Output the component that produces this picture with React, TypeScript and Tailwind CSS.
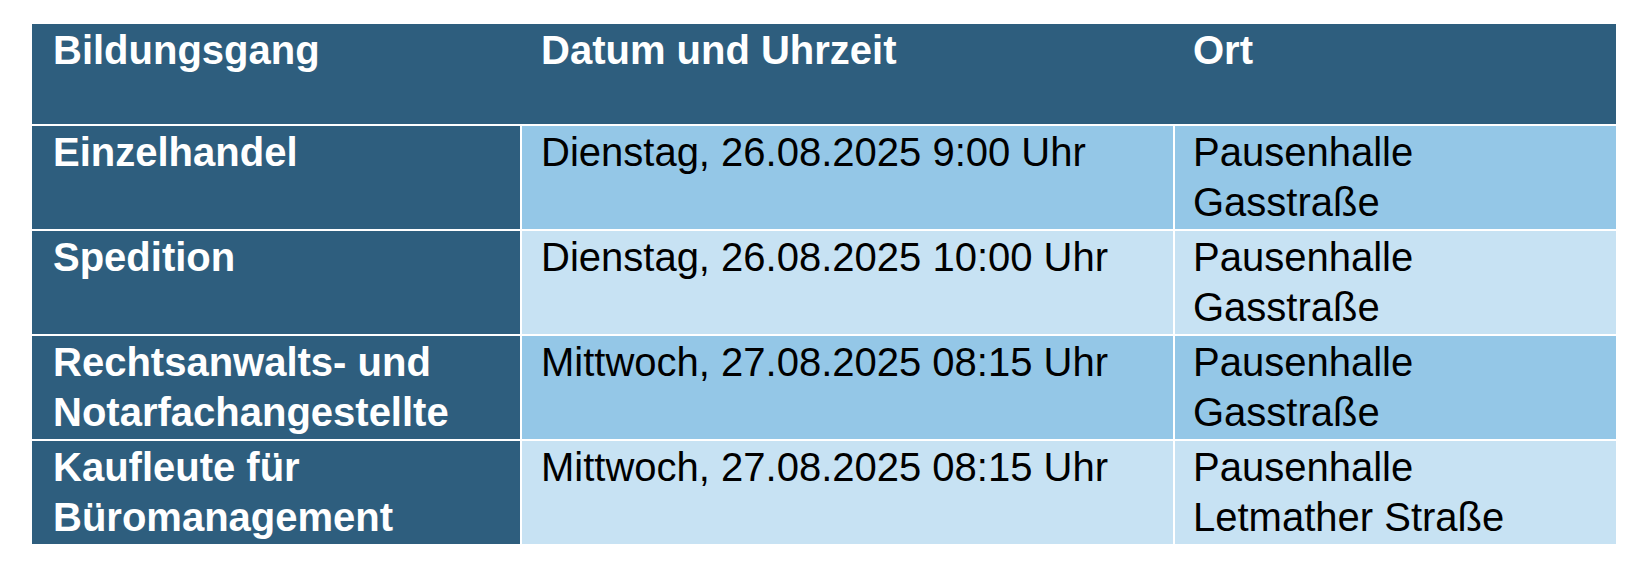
import React from "react";

const rows = [
  { bg: "bg-[#94c7e7]", a: ["Einzelhandel"], b: "Dienstag, 26.08.2025 9:00 Uhr", c: ["Pausenhalle", "Gasstraße"] },
  { bg: "bg-[#c7e2f3]", a: ["Spedition"], b: "Dienstag, 26.08.2025 10:00 Uhr", c: ["Pausenhalle", "Gasstraße"] },
  { bg: "bg-[#94c7e7]", a: ["Rechtsanwalts- und", "Notarfachangestellte"], b: "Mittwoch, 27.08.2025 08:15 Uhr", c: ["Pausenhalle", "Gasstraße"] },
  { bg: "bg-[#c7e2f3]", a: ["Kaufleute für", "Büromanagement"], b: "Mittwoch, 27.08.2025 08:15 Uhr", c: ["Pausenhalle", "Letmather Straße"] },
];

function Lines({ lines }: { lines: string[] }) {
  return (
    <>
      {lines.map((l, i) => (
        <React.Fragment key={i}>
          {i > 0 && <br />}
          {l}
        </React.Fragment>
      ))}
    </>
  );
}

export default function App() {
  return (
    <div
      className="min-h-[570px] w-[1648px] bg-white pl-[32px] pt-[24px] text-[40px] leading-[50px]"
      style={{ fontFamily: '"Liberation Sans", Arial, sans-serif' }}
    >
      <div className="grid w-[1584px] grid-cols-[488px_651px_441px] gap-[2px] bg-white">
        <div className="col-span-3 flex h-[100px] bg-[#2e5e7e] pt-[1px] font-bold text-white">
          <div className="w-[490px] pl-[21px]">Bildungsgang</div>
          <div className="w-[653px] pl-[19px]">Datum und Uhrzeit</div>
          <div className="flex-1 pl-[18px]">Ort</div>
        </div>
        {rows.map((r, i) => (
          <React.Fragment key={i}>
            <div className="h-[103px] bg-[#2e5e7e] pl-[21px] pt-[1px] font-bold text-white">
              <Lines lines={r.a} />
            </div>
            <div className={`h-[103px] ${r.bg} pl-[19px] pt-[1px] text-black`}>{r.b}</div>
            <div className={`h-[103px] ${r.bg} pl-[18px] pt-[1px] text-black`}>
              <Lines lines={r.c} />
            </div>
          </React.Fragment>
        ))}
      </div>
    </div>
  );
}
